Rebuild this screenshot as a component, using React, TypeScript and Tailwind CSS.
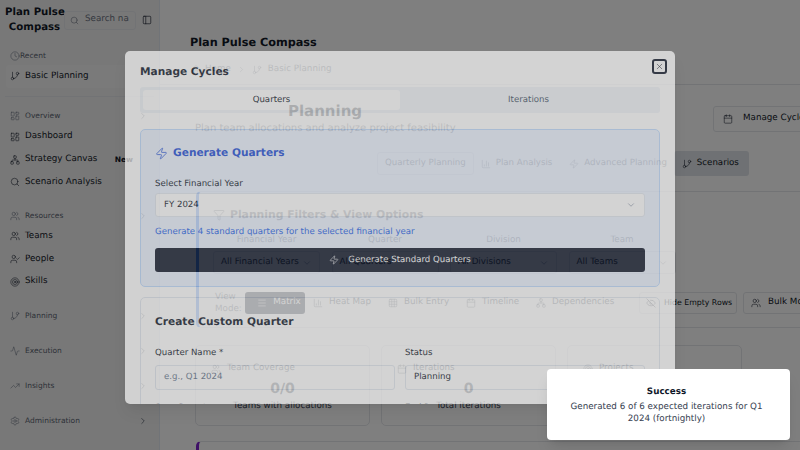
import React from "react";
import {
  Activity, BarChart3, Calendar, ChevronDown, ChevronRight, Clock, Network, EyeOff, Filter, GitBranch, Grid3x3,
  LayoutDashboard, Menu, PanelLeft, Search, Settings, Target, TrendingUp, UserCheck, Users, X, Zap, Home,
} from "lucide-react";

const font = { fontFamily: '"DejaVu Sans", sans-serif', textRendering: "geometricPrecision" as const };

function Group({ icon: I, label, chevron, gap }: any) {
  return (
    <div className={`h-[14px] flex items-center pl-[10px] pr-[11px] text-[7.5px] text-[#5c6470] ${gap || "gap-[5px]"}`}>
      <I size={10} strokeWidth={1.3} className="text-[#6b7280] shrink-0" />
      <span className="flex-1">{label}</span>
      {chevron && <ChevronRight size={10} strokeWidth={1.5} className="text-[#374151]" />}
    </div>
  );
}

function Item({ icon: I, label, tag }: any) {
  return (
    <div className="h-[22.7px] flex items-center pl-[10px] gap-[5px] text-[8.75px] text-[#111827]">
      <I size={10} strokeWidth={1.3} className="shrink-0" />
      <span className="flex-1 whitespace-nowrap">{label}</span>
      {tag && <span className="text-[7.5px] font-bold text-[#111827] mr-[26px]">{tag}</span>}
    </div>
  );
}

function Sidebar() {
  return (
    <aside className="w-[160px] shrink-0 h-full border-r border-[#e2e8f0] bg-[#f1f1f1] flex flex-col">
      <div className="h-[40px] flex items-center pl-[5px]">
        <div className="w-[59px] shrink-0 text-center font-bold text-[10.2px] leading-[15px] text-[#111827] whitespace-nowrap">
          Plan Pulse
          <br />
          Compass
        </div>
        <div className="w-[72px] h-[19px] border border-[#e5e7eb] rounded-[3px] flex items-center pl-[5px] gap-[6px] text-[8.75px] text-[#6b7280] overflow-hidden">
          <Search size={9} strokeWidth={1.5} className="shrink-0" />
          <span className="whitespace-nowrap">Search na</span>
        </div>
        <PanelLeft size={10} strokeWidth={1.5} className="ml-[6px] text-[#111827]" />
      </div>
      <div className="mt-[9px]">
        <Group icon={Clock} label="Recent" gap="gap-0" />
        <div className="h-[22.5px] flex items-center pl-[4px] gap-[5px] text-[8.75px] text-[#111827] bg-[#f5f5f5] rounded-[3px] mt-[2px] ml-[6px] mr-[8px]">
          <GitBranch size={10} strokeWidth={1.3} />
          <span>Basic Planning</span>
        </div>
      </div>
      <div className="h-px bg-[#e5e7eb] mx-[5px] mt-[8px]" />
      <div className="mt-[12px]">
        <Group icon={LayoutDashboard} label="Overview" chevron />
      </div>
      <div className="mt-[3px]">
        <Item icon={LayoutDashboard} label="Dashboard" />
        <Item icon={Network} label="Strategy Canvas" tag="New" />
        <Item icon={Search} label="Scenario Analysis" />
      </div>
      <div className="mt-[15.5px]">
        <Group icon={Users} label="Resources" chevron />
      </div>
      <div className="mt-[2px]">
        <Item icon={Users} label="Teams" />
        <Item icon={UserCheck} label="People" />
        <Item icon={Target} label="Skills" />
      </div>
      <div className="mt-[15.5px] flex flex-col gap-[21px]">
        <Group icon={GitBranch} label="Planning" chevron />
        <Group icon={Activity} label="Execution" chevron />
        <Group icon={TrendingUp} label="Insights" chevron />
        <Group icon={Settings} label="Administration" chevron />
      </div>
    </aside>
  );
}

function Tab({ icon: I, label, cls }: any) {
  return (
    <div className={`flex items-center gap-[5px] rounded-[3px] whitespace-nowrap ${cls}`}>
      {I && <I size={10} strokeWidth={1.3} />}
      <span>{label}</span>
    </div>
  );
}

function FilterSelect({ label, value }: any) {
  return (
    <div className="w-[107px] shrink-0">
      <div className="text-center text-[8.75px] text-[#6b7280] h-[15px] leading-[15px] mb-[3px]">{label}</div>
      <div className="h-[23px] border border-[#e5e7eb] rounded-[3px] flex items-center justify-between px-[7px] text-[8.75px] text-[#111827] whitespace-nowrap">
        <span>{value}</span>
        <ChevronDown size={10} strokeWidth={1.3} className="text-[#6b7280]" />
      </div>
    </div>
  );
}

function ViewTab({ icon: I, label, active, w }: any) {
  return (
    <div className={`h-[22px] flex items-center gap-[6px] pl-[8px] rounded-[3px] text-[8.75px] whitespace-nowrap ${w} ${active ? "bg-[#0f172a] text-white" : "text-[#4b5563]"}`}>
      <I size={10} strokeWidth={1.3} />
      <span>{label}</span>
    </div>
  );
}

function Stat({ icon: I, title, value, sub }: any) {
  return (
    <div className="w-[175px] h-[81px] border border-[#e5e7eb] rounded-[5px] flex flex-col pt-[16px] shrink-0">
      <div className="flex items-center gap-[6px] pl-[15px] h-[14px] text-[8.75px] text-[#4b5563]">
        <I size={10} strokeWidth={1.3} />
        <span>{title}</span>
      </div>
      <div className="text-center text-[14px] font-bold text-[#374151] leading-[20px] mt-[3px]">{value}</div>
      <div className="text-center text-[8.75px] leading-[12px] text-[#374151] mt-[1px]">{sub}</div>
    </div>
  );
}

function Main() {
  return (
    <main className="flex-1 min-w-0 h-full overflow-hidden bg-white">
      <div className="w-[680px]">
        <div className="h-[85px] border-b border-[#e5e7eb] w-[680px] pl-[30px] pt-[35px]">
          <div className="font-bold text-[11.25px] leading-[15px] text-[#111827]">Plan Pulse Compass</div>
          <div className="flex items-center gap-[6px] mt-[13px] ml-[1px] text-[8.75px] text-[#6b7280]">
            <Home size={10} strokeWidth={1.3} />
            <span className="-ml-[2px]">Home</span>
            <ChevronRight size={9} strokeWidth={1.3} />
            <GitBranch size={10} strokeWidth={1.3} />
            <span>Basic Planning</span>
          </div>
        </div>
        <div className="pl-[35px] w-[680px] flex flex-col">
          <div className="flex justify-between mt-[16px] h-[36px]">
            <div className="text-center w-[260px]">
              <div className="font-bold text-[15px] leading-[20px] text-[#111827]">Planning</div>
              <div className="text-[10px] leading-[14px] mt-[1px] text-[#6b7280] whitespace-nowrap">Plan team allocations and analyze project feasibility</div>
            </div>
            <div className="h-[26px] w-[127px] mt-[5px] border border-[#e5e7eb] rounded-[3px] flex items-center gap-[10px] pl-[9px] text-[8.75px] text-[#111827] whitespace-nowrap shrink-0">
              <Calendar size={10} strokeWidth={1.3} />
              <span>Manage Cycles</span>
            </div>
          </div>
          <div className="flex items-center mt-[14px] ml-[182px] h-[25px] text-[8.65px]">
            <Tab label="Quarterly Planning" cls="h-[23px] px-[7px] border border-[#e5e7eb] text-[#6b7280]" />
            <Tab icon={BarChart3} label="Plan Analysis" cls="h-[23px] px-[7px] text-[#6b7280]" />
            <Tab icon={Zap} label="Advanced Planning" cls="h-[23px] pl-[10px] pr-[8px] text-[#6b7280]" />
            <Tab icon={GitBranch} label="Scenarios" cls="h-[25px] -ml-[1px] pl-[8px] pr-[10px] bg-[#dfe3e8] text-[#111827]" />
          </div>
          <div className="mt-[15px] ml-[1px] h-[137px] w-[640px] shrink-0 border border-[#e5e7eb] border-l-[3px] border-l-[#3b82f6] rounded-[5px] pl-[14px] pt-[15px]">
            <div className="flex items-center gap-[5px] text-[#6b7280]">
              <Filter size={12} strokeWidth={1.3} />
              <span className="text-[10.8px] font-bold leading-[15px]">Planning Filters &amp; View Options</span>
            </div>
            <div className="flex gap-[11.5px] mt-[11px]">
              <FilterSelect label="Financial Year" value="All Financial Years" />
              <FilterSelect label="Quarter" value="All Quarters" />
              <FilterSelect label="Division" value="All Divisions" />
              <FilterSelect label="Team" value="All Teams" />
            </div>
            <div className="flex items-center mt-[17px]">
              <div className="w-[32px] pl-[2px] text-[8.75px] leading-[12px] text-[#6b7280]">View Mode:</div>
              <ViewTab icon={Menu} label="Matrix" active w="w-[60px] justify-center pl-0" />
              <ViewTab icon={BarChart3} label="Heat Map" w="w-[75px]" />
              <ViewTab icon={Grid3x3} label="Bulk Entry" w="w-[78px]" />
              <ViewTab icon={Calendar} label="Timeline" w="w-[70px]" />
              <ViewTab icon={Network} label="Dependencies" w="w-[92px]" />
              <div className="ml-[19px] h-[22px] w-[98px] shrink-0 border border-[#e5e7eb] rounded-[3px] flex items-center gap-[8px] pl-[6px] text-[7.8px] text-[#111827] whitespace-nowrap">
                <EyeOff size={10} strokeWidth={1.3} />
                <span>Hide Empty Rows</span>
              </div>
              <div className="ml-[6px] h-[22px] w-[90px] shrink-0 border border-[#e5e7eb] rounded-[3px] flex items-center gap-[7px] pl-[7px] text-[8.75px] text-[#111827] whitespace-nowrap">
                <Users size={10} strokeWidth={1.3} />
                <span>Bulk Mode</span>
              </div>
            </div>
          </div>
          <div className="flex gap-[11px] mt-[17px]">
            <Stat icon={Users} title="Team Coverage" value="0/0" sub="Teams with allocations" />
            <Stat icon={Calendar} title="Iterations" value="0" sub="Total iterations" />
            <Stat icon={Target} title="Projects" value="0" sub="Active projects" />
          </div>
          <div className="mt-[15px] ml-[1px] h-[40px] w-[640px] shrink-0 border border-[#e5e7eb] border-l-[3px] border-l-[#7e22ce] rounded-[5px]" />
        </div>
      </div>
    </main>
  );
}

function Dialog() {
  return (
    <div className="absolute left-[125px] top-[51px] w-[550px] h-[353px] overflow-hidden rounded-[5px] bg-white opacity-[0.66] shadow-lg px-[15px] pt-[14px] text-[#020817]">
      <div className="font-bold text-[10.6px] leading-[15px] text-[#0f172a]">Manage Cycles</div>
      <div className="absolute right-[8px] top-[8px] w-[15px] h-[15px] rounded-[3px] border-2 border-[#0f172a] flex items-center justify-center">
        <X size={9} strokeWidth={1.4} />
      </div>
      <div className="mt-[7px] h-[26px] rounded-[3px] bg-[#f1f5f9] p-[3px] grid grid-cols-2 text-[8.6px]">
        <div className="bg-white rounded-[3px] flex items-center justify-center text-[#0f172a]">Quarters</div>
        <div className="flex items-center justify-center text-[#475569]">Iterations</div>
      </div>
      <div className="mt-[16px] h-[158px] rounded-[5px] border border-[#bfdbfe] bg-[#ecf3ff] px-[14px] pt-[16px]">
        <div className="flex items-center gap-[5px] text-[#1d4ed8]">
          <Zap size={13} strokeWidth={1.4} />
          <span className="font-bold text-[10.6px] leading-[15px]">Generate Quarters</span>
        </div>
        <div className="mt-[17px] text-[8.6px] leading-[12px] text-[#0f172a]">Select Financial Year</div>
        <div className="mt-[3px] h-[24px] rounded-[3px] bg-white border border-[#e2e8f0] flex items-center justify-between px-[8px] text-[8.6px] text-[#0f172a]">
          <span>FY 2024</span>
          <ChevronDown size={10} strokeWidth={1.3} className="text-[#64748b]" />
        </div>
        <div className="mt-[9px] text-[8.6px] leading-[12px] text-[#2563eb]">Generate 4 standard quarters for the selected financial year</div>
        <div className="mt-[10px] h-[24px] rounded-[3px] bg-[#0f172a] text-white flex items-center justify-center gap-[9px] text-[8.6px]">
          <Zap size={10} strokeWidth={1.4} />
          <span>Generate Standard Quarters</span>
        </div>
      </div>
      <div className="mt-[10px] h-[200px] rounded-[5px] border border-[#e2e8f0] bg-white px-[14px] pt-[17px]">
        <div className="font-bold text-[10.6px] leading-[15px] text-[#0f172a]">Create Custom Quarter</div>
        <div className="grid grid-cols-2 gap-x-[10px] mt-[17px]">
          <div>
            <div className="text-[8.6px] leading-[12px] text-[#0f172a]">Quarter Name *</div>
            <div className="mt-[6px] h-[25px] rounded-[3px] border border-[#e2e8f0] flex items-center px-[8px] text-[8.6px] text-[#64748b]">e.g., Q1 2024</div>
            <div className="mt-[12px] text-[8.6px] leading-[12px] text-[#0f172a]">Start Date *</div>
          </div>
          <div>
            <div className="text-[8.6px] leading-[12px] text-[#0f172a]">Status</div>
            <div className="mt-[6px] h-[25px] rounded-[3px] border border-[#e2e8f0] flex items-center px-[8px] text-[8.6px] text-[#0f172a]">Planning</div>
            <div className="mt-[12px] text-[8.6px] leading-[12px] text-[#0f172a]">End Date *</div>
          </div>
        </div>
      </div>
    </div>
  );
}

export default function App() {
  return (
    <div className="relative w-[800px] h-[450px] overflow-hidden flex bg-white" style={font}>
      <Sidebar />
      <Main />
      <div className="absolute inset-0 bg-black/50" />
      <Dialog />
      <div className="absolute left-[547px] top-[369px] w-[243px] h-[71px] bg-white rounded-[4px] shadow-lg flex flex-col items-center justify-center pl-[12px] pr-[16px] pt-[2px] text-center">
        <div className="font-bold text-[8.75px] leading-[13px] text-[#0f172a]">Success</div>
        <div className="mt-[2px] text-[8.75px] leading-[12px] text-[#374151]">Generated 6 of 6 expected iterations for Q1 2024 (fortnightly)</div>
      </div>
    </div>
  );
}
